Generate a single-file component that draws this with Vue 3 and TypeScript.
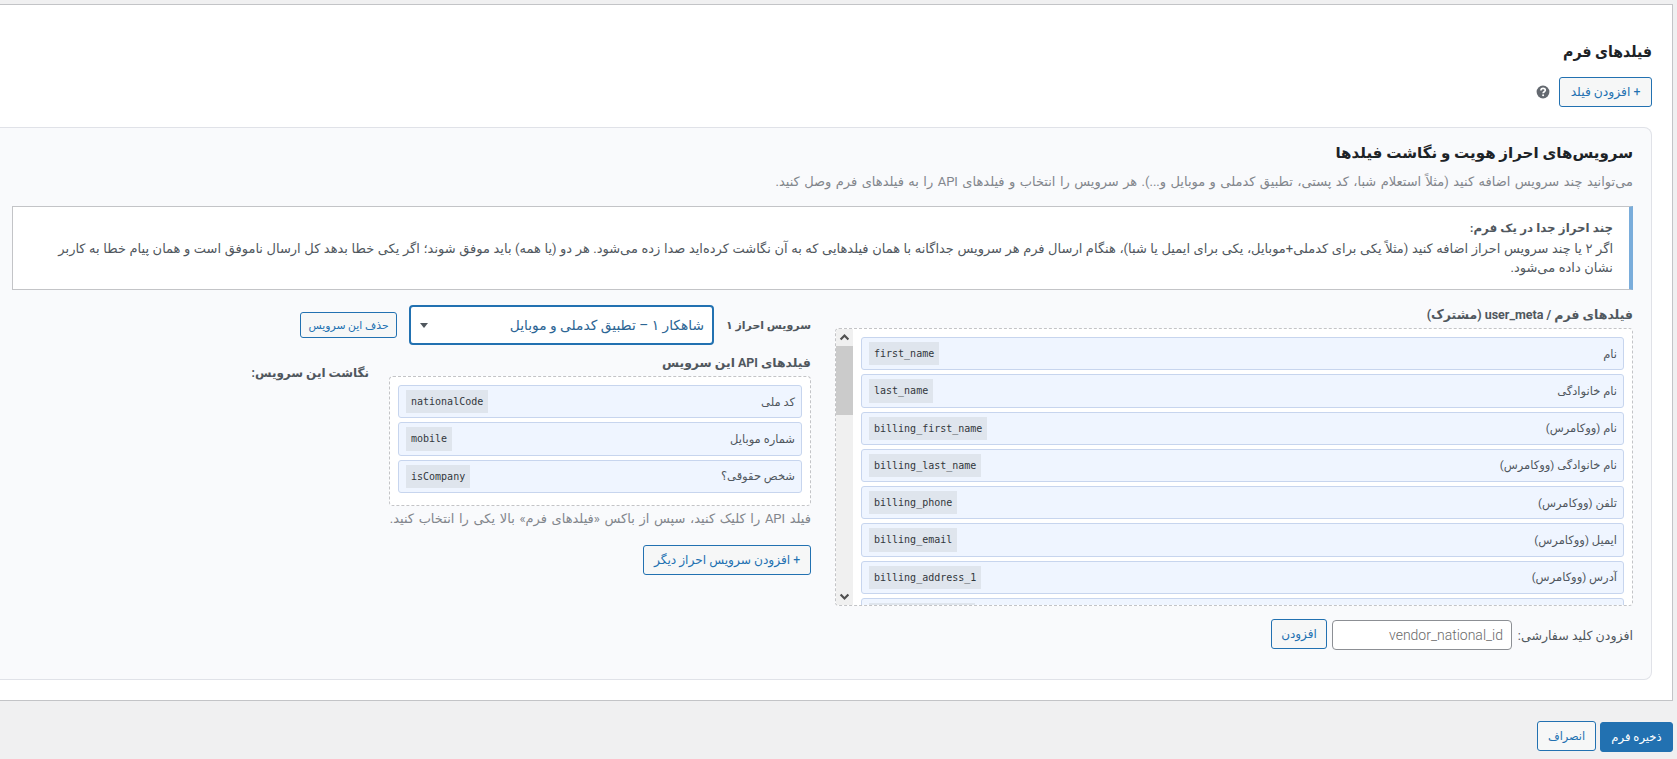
<script setup lang="ts">
interface Field {
  label: string
  key: string
}

const formFields: Field[] = [
  { label: 'نام', key: 'first_name' },
  { label: 'نام خانوادگی', key: 'last_name' },
  { label: 'نام (ووکامرس)', key: 'billing_first_name' },
  { label: 'نام خانوادگی (ووکامرس)', key: 'billing_last_name' },
  { label: 'تلفن (ووکامرس)', key: 'billing_phone' },
  { label: 'ایمیل (ووکامرس)', key: 'billing_email' },
  { label: 'آدرس (ووکامرس)', key: 'billing_address_1' },
  { label: '', key: 'billing_postcode' },
]

const apiFields: Field[] = [
  { label: 'کد ملی', key: 'nationalCode' },
  { label: 'شماره موبایل', key: 'mobile' },
  { label: 'شخص حقوقی؟', key: 'isCompany' },
]
</script>

<template>
  <div class="page" dir="rtl">
    <main class="box">
      <h2 class="title">فیلدهای فرم</h2>
      <div class="toolbar">
        <button class="btn b-field">+ افزودن فیلد</button>
        <svg class="help" viewBox="0 0 14 14" width="14" height="14">
          <circle cx="7" cy="7" r="6.4" fill="#646970" />
          <path d="M4.9 5.5C4.9 4.2 5.8 3.4 7.1 3.4S9.3 4.2 9.3 5.3C9.3 6.8 7.1 6.7 7.1 8.3" fill="none" stroke="#fff" stroke-width="1.6" />
          <circle cx="7.1" cy="10.2" r="1" fill="#fff" />
        </svg>
      </div>

      <section class="panel">
        <h3 class="subtitle">سرویس‌های احراز هویت و نگاشت فیلدها</h3>
        <p class="desc">می‌توانید چند سرویس اضافه کنید (مثلاً استعلام شبا، کد پستی، تطبیق کدملی و موبایل و...). هر سرویس را انتخاب و فیلدهای API را به فیلدهای فرم وصل کنید.</p>

        <div class="notice">
          <strong class="nl">چند احراز جدا در یک فرم:</strong>
          <div class="nl">اگر ۲ یا چند سرویس احراز اضافه کنید (مثلاً یکی برای کدملی+موبایل، یکی برای ایمیل یا شبا)، هنگام ارسال فرم هر سرویس جداگانه با همان فیلدهایی که به آن نگاشت کرده‌اید صدا زده می‌شود. هر دو (یا همه) باید موفق شوند؛ اگر یکی خطا بدهد کل ارسال ناموفق است و همان پیام خطا به کاربر</div>
          <div class="nl">نشان داده می‌شود.</div>
        </div>

        <div class="columns">
          <div class="fields">
            <div class="label shared">فیلدهای فرم / user_meta (مشترک)</div>
            <div class="list tall">
              <div class="items">
                <div v-for="f in formFields" :key="f.key" class="item">
                  <span class="name">{{ f.label }}</span>
                  <code>{{ f.key }}</code>
                </div>
              </div>
              <div class="scroll">
                <svg viewBox="0 0 17 17" width="17" height="17"><path d="M4.6 10.5 8.5 6.500l3.900 4" fill="none" stroke="#505050" stroke-width="2.2" /></svg>
                <div class="thumb"></div>
                <svg class="down" viewBox="0 0 17 17" width="17" height="17"><path d="M4.6 6.5 8.5 10.5l3.9-4" fill="none" stroke="#505050" stroke-width="2.2" /></svg>
              </div>
            </div>
            <div class="custom">
              <span class="custom-label">افزودن کلید سفارشی:</span>
              <div class="input">vendor_national_id</div>
              <button class="btn b-add">افزودن</button>
            </div>
          </div>

          <div class="service">
            <div class="service-head">
              <div class="label head-label">سرویس احراز ۱</div>
              <div class="select">
                <span>شاهکار ۱ – تطبیق کدملی و موبایل</span>
                <i class="caret"></i>
              </div>
              <button class="btn b-del">حذف این سرویس</button>
            </div>
            <div class="service-body">
              <div class="api">
                <div class="label api-label">فیلدهای API این سرویس</div>
                <div class="list short">
                  <div class="items">
                    <div v-for="f in apiFields" :key="f.key" class="item">
                      <span class="name">{{ f.label }}</span>
                      <code>{{ f.key }}</code>
                    </div>
                  </div>
                </div>
                <p class="hint">فیلد API را کلیک کنید، سپس از باکس «فیلدهای فرم» بالا یکی را انتخاب کنید.</p>
              </div>
              <div class="label mapping">نگاشت این سرویس:</div>
            </div>
            <button class="btn b-more">+ افزودن سرویس احراز دیگر</button>
          </div>
        </div>
      </section>
    </main>

    <footer class="actions">
      <button class="btn primary">ذخیره فرم</button>
      <button class="btn b-cancel">انصراف</button>
    </footer>
  </div>
</template>

<style>
body {
  background: #f0f0f1;
  overflow: hidden;
}
</style>

<style scoped>
* {
  box-sizing: border-box;
}
.page {
  width: 1677px;
  height: 759px;
  padding: 4px 4px 0 0;
  overflow: hidden;
  background: #f0f0f1;
  color: #50575e;
  font-family: Roboto, "DejaVu Sans", sans-serif;
  font-size: 12px;
  white-space: nowrap;
}
h2, h3, p {
  margin: 0;
}
.box {
  height: 697px;
  padding: 34px 20px 0 0;
  background: #fff;
  border: 1px solid #c3c4c7;
  border-left: 0;
}
.title {
  height: 24px;
  line-height: 25px;
  color: #1d2327;
  font-family: Roboto, "DejaVu Sans Condensed", "DejaVu Sans", sans-serif;
  font-size: 15.7px;
  font-stretch: condensed;
}
.toolbar {
  display: flex;
  align-items: center;
  gap: 9.5px;
  margin-top: 14px;
}
.btn {
  display: flex;
  align-items: center;
  justify-content: center;
  height: 30px;
  padding: 0;
  border: 1px solid #2271b1;
  border-radius: 3px;
  background: #f6f7f7;
  color: #2271b1;
  font: inherit;
  white-space: nowrap;
}
.btn.b-field {
  width: 93px;
  font-size: 12.3px;
}
.panel {
  height: 553px;
  margin-top: 20px;
  padding: 13px 18px 0 0;
  background: #f9fafc;
  border: 1px solid #e0e2e8;
  border-left: 0;
  border-radius: 0 8px 8px 0;
}
.subtitle {
  height: 24px;
  line-height: 24px;
  color: #1d2327;
  font-size: 15.1px;
}
.desc {
  height: 20px;
  margin-top: 6px;
  line-height: 21px;
  color: #82868c;
  font-size: 13px;
  word-spacing: 1.2px;
}
.notice {
  height: 84px;
  margin: 15px 0 0 12px;
  padding: 12px 16px 0 0;
  background: #fff;
  border: 1px solid #c3c4c7;
  border-right: 4px solid #7aaddb;
  font-size: 13px;
  word-spacing: 0.33px;
}
.nl {
  display: block;
  height: 19.5px;
  line-height: 19.5px;
}
strong.nl {
  font-size: 11.8px;
}
.columns {
  display: flex;
  gap: 24px;
  margin-top: 15px;
}
.fields {
  width: 798px;
}
.label {
  height: 20px;
  line-height: 20px;
  font-weight: 700;
}
.shared {
  font-size: 12.5px;
}
.api-label {
  font-size: 12.4px;
}
.list {
  display: flex;
  overflow: hidden;
  margin-top: 3px;
  background: #fff;
  border: 1px dashed #c3c4c7;
  border-radius: 4px;
}
.tall {
  height: 278px;
}
.short {
  height: 129.5px;
}
.items {
  flex: 1;
  display: flex;
  flex-direction: column;
  gap: 4px;
  padding: 8px;
}
.item {
  flex: none;
  display: flex;
  align-items: center;
  justify-content: space-between;
  height: 33.25px;
  padding: 0 6px 0 7px;
  background: #eff5ff;
  border: 1px solid #c7d5ee;
  border-radius: 3px;
}
.name {
  font-size: 11.5px;
}
code {
  height: 23.25px;
  padding: 0 5px;
  background: #dfe5ed;
  color: #32373c;
  font-family: "DejaVu Sans Mono", monospace;
  font-size: 10px;
  line-height: 23px;
}
.scroll {
  display: flex;
  flex-direction: column;
  width: 17px;
  background: #f0f0f0;
}
.thumb {
  height: 69px;
  background: #cbcbcb;
}
.down {
  margin-top: auto;
}
.custom {
  display: flex;
  align-items: flex-start;
  margin-top: 13px;
}
.custom-label {
  width: 121px;
  font-size: 12.6px;
  line-height: 34px;
}
.input {
  width: 180px;
  height: 30px;
  margin-top: 1px;
  padding: 0 8px;
  border: 1px solid #8c8f94;
  border-radius: 4px;
  background: #fff;
  color: #6a6a6a;
  font-size: 14px;
  font-weight: 300;
  line-height: 29px;
}
.btn.b-add {
  width: 56px;
  margin-right: 5px;
}
.service {
  width: 560px;
}
.service-head {
  display: flex;
  align-items: center;
  height: 40px;
}
.head-label {
  width: 97px;
  font-size: 11px;
  line-height: 21px;
}
.select {
  display: flex;
  align-items: center;
  justify-content: space-between;
  width: 305px;
  height: 40px;
  padding: 0 8px 0 9px;
  border: 2px solid #2271b1;
  border-radius: 4px;
  background: #fff;
  color: #2c6594;
  font-size: 13.8px;
}
.caret {
  width: 0;
  height: 0;
  border: 4px solid transparent;
  border-top: 5px solid #50575e;
  border-bottom: 0;
}
.btn.b-del {
  width: 97px;
  height: 26px;
  margin-right: 12px;
  font-size: 10.8px;
}
.service-body {
  display: flex;
  gap: 20px;
  margin-top: 8px;
}
.api {
  width: 422px;
}
.mapping {
  margin-top: 10px;
  line-height: 21px;
}
.hint {
  height: 20px;
  margin-top: 3.5px;
  line-height: 20px;
  color: #82868c;
  font-size: 13px;
  word-spacing: 1.4px;
}
.btn.b-more {
  width: 168px;
  margin-top: 16px;
  font-size: 12.2px;
}
.actions {
  display: flex;
  align-items: flex-start;
  gap: 4px;
  margin-top: 20px;
}
.btn.primary {
  width: 73px;
  margin-top: 1px;
  background: #2271b1;
  color: #fff;
  font-size: 11.6px;
}
.btn.b-cancel {
  width: 59px;
  font-size: 11.3px;
}
</style>
